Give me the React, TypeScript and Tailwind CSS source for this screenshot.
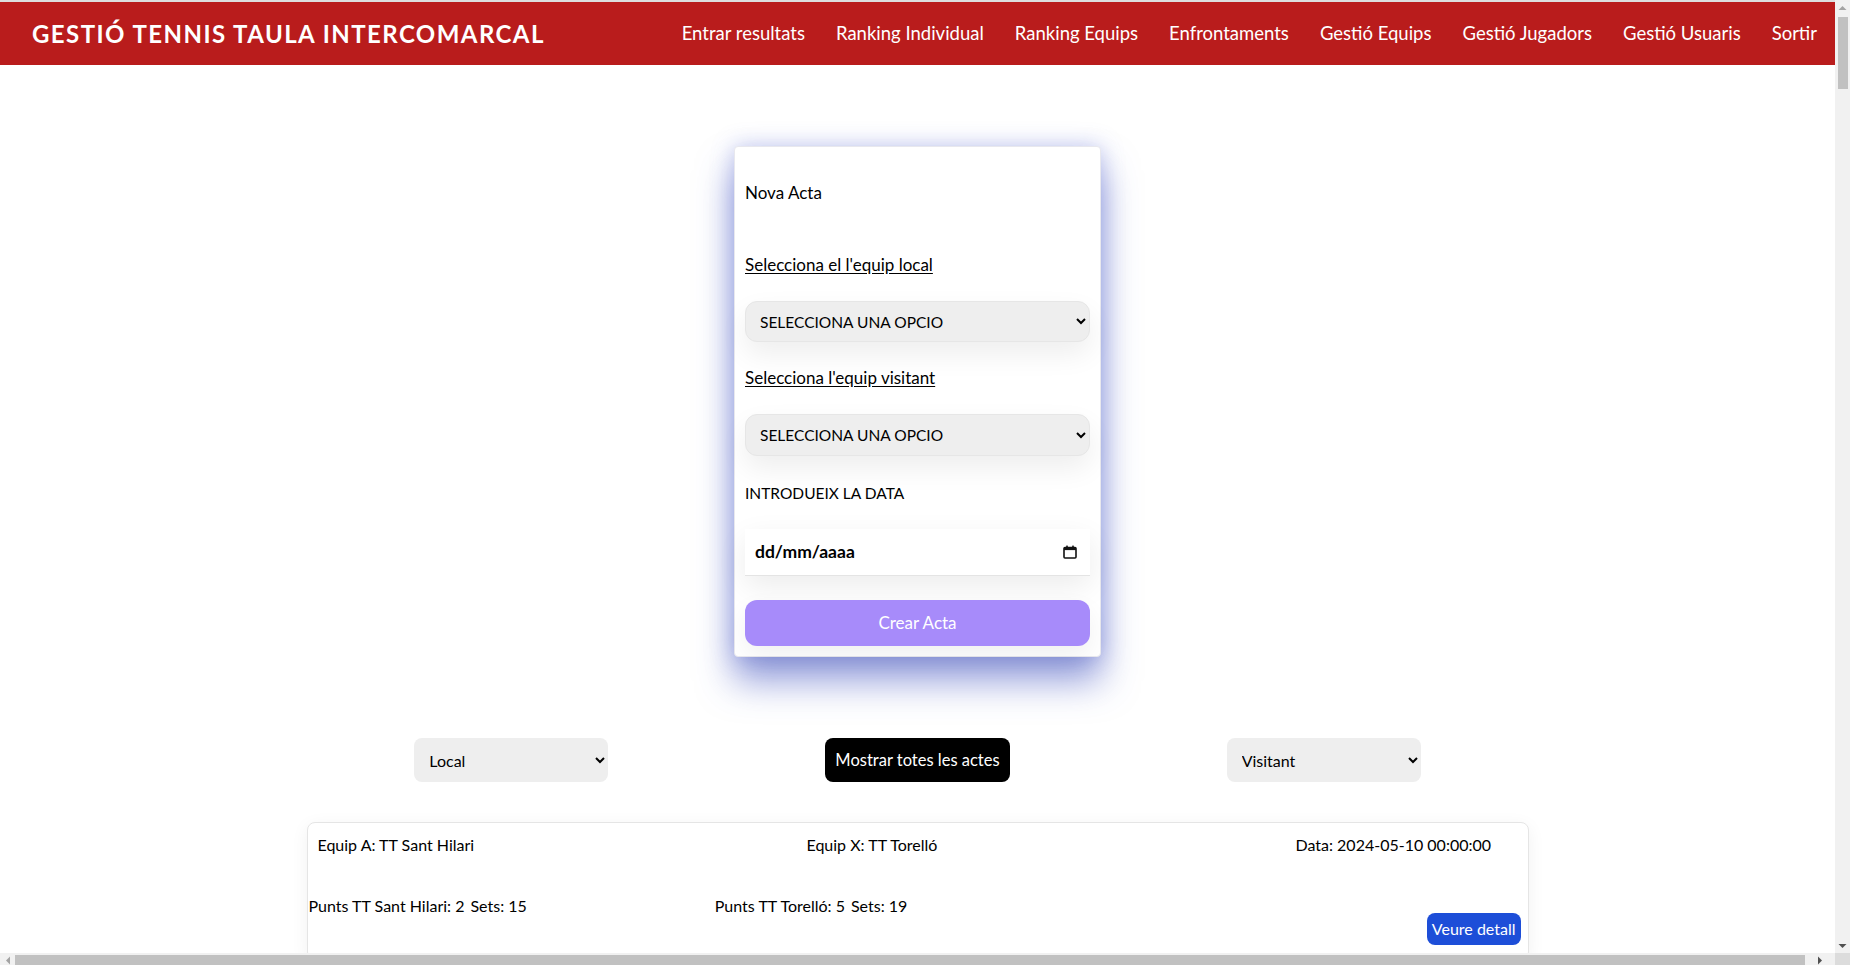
import { useState } from "react";

const links = [
  "Entrar resultats",
  "Ranking Individual",
  "Ranking Equips",
  "Enfrontaments",
  "Gestió Equips",
  "Gestió Jugadors",
  "Gestió Usuaris",
  "Sortir",
];

const teams = ["TT Sant Hilari", "TT Torelló", "CTT Vic", "TT Manlleu", "CTT Olot", "TT Ripoll"];

type Acta = {
  local: string;
  visitant: string;
  data: string;
  puntsA: number;
  setsA: number;
  puntsB: number;
  setsB: number;
};

const actes: Acta[] = [
  { local: "TT Sant Hilari", visitant: "TT Torelló", data: "2024-05-10 00:00:00", puntsA: 2, setsA: 15, puntsB: 5, setsB: 19 },
  { local: "CTT Vic", visitant: "TT Manlleu", data: "2024-05-03 00:00:00", puntsA: 4, setsA: 17, puntsB: 3, setsB: 14 },
];

function CalendarIcon() {
  return (
    <svg width="14" height="14" viewBox="0 0 14 14" fill="none">
      <rect x="1" y="2.5" width="12" height="10.5" rx="1" stroke="#111" strokeWidth="1.6" />
      <rect x="1" y="2.5" width="12" height="2.6" fill="#111" />
      <rect x="3.2" y="0.6" width="1.6" height="2.6" fill="#111" />
      <rect x="9.2" y="0.6" width="1.6" height="2.6" fill="#111" />
    </svg>
  );
}

function Arrow({ dir, color }: { dir: "up" | "down" | "left" | "right"; color: string }) {
  const pts = {
    up: "3.5,6 7.5,2 11.5,6",
    down: "3.5,2 7.5,6 11.5,2",
    left: "6,0.5 2,4.5 6,8.5",
    right: "2,0.5 6,4.5 2,8.5",
  }[dir];
  const vertical = dir === "up" || dir === "down";
  return (
    <svg width={vertical ? 15 : 8} height={vertical ? 8 : 9} viewBox={vertical ? "0 0 15 8" : "0 0 8 9"}>
      <polygon points={pts} fill={color} />
    </svg>
  );
}

// fake window scrollbars, as in the reference capture
function Scrollbars() {
  return (
    <>
      <div className="fixed top-0 right-0 w-[15px] h-[953px] bg-[#f1f1f1] flex flex-col items-center">
        <div className="h-[15px] flex items-center">
          <Arrow dir="up" color="#a3a3a3" />
        </div>
        <div className="mt-[2px] w-[10px] h-[72px] bg-[#c1c1c1]" />
        <div className="mt-auto h-[15px] flex items-center">
          <Arrow dir="down" color="#505050" />
        </div>
      </div>
      <div className="fixed bottom-0 left-0 w-[1835px] h-[12px] bg-[#f1f1f1] flex items-end">
        <div className="w-[15px] h-[10px] flex items-center justify-center">
          <Arrow dir="left" color="#a3a3a3" />
        </div>
        <div className="w-[1790px] h-[10px] bg-[#c1c1c1]" />
        <div className="flex-1 h-[10px] flex items-center justify-center">
          <Arrow dir="right" color="#505050" />
        </div>
      </div>
      <div className="fixed bottom-0 right-0 w-[15px] h-[12px] bg-[#dcdcdc]" />
    </>
  );
}

function NovaActa() {
  const [local, setLocal] = useState("");
  const [visitant, setVisitant] = useState("");

  return (
    <div className="w-[367px] mx-auto mt-[81px] bg-white border border-[#e8e8ee] rounded-[4px] shadow-[0_0_22px_rgba(95,110,215,0.35),0_24px_36px_rgba(60,78,190,0.55)] px-[10px] pt-[34px] pb-[10px] flex flex-col gap-6 text-[17px] leading-6 text-black">
      <h2 className="mb-6">Nova Acta</h2>

      <label htmlFor="local" className="underline underline-offset-2">
        Selecciona el l'equip local
      </label>
      <select
        id="local"
        value={local}
        onChange={(e) => setLocal(e.target.value)}
        className="h-[41px] w-full rounded-xl bg-[#eeeeee] border border-[#e6e6e6] pl-[10px] pr-2 text-[15.5px] uppercase shadow-[0_12px_28px_rgba(0,0,0,0.07)]"
      >
        <option value="">SELECCIONA UNA OPCIO</option>
        {teams.map((t) => (
          <option key={t}>{t}</option>
        ))}
      </select>

      <label htmlFor="visitant" className="underline underline-offset-2">
        Selecciona l'equip visitant
      </label>
      <select
        id="visitant"
        value={visitant}
        onChange={(e) => setVisitant(e.target.value)}
        className="h-[42px] w-full rounded-xl bg-[#eeeeee] border border-[#e6e6e6] pl-[10px] pr-2 text-[15.5px] uppercase shadow-[0_12px_28px_rgba(0,0,0,0.07)]"
      >
        <option value="">SELECCIONA UNA OPCIO</option>
        {teams.map((t) => (
          <option key={t}>{t}</option>
        ))}
      </select>

      <span className="text-[15.5px] mt-px">INTRODUEIX LA DATA</span>
      <div className="h-[47px] w-full bg-white border-b border-[#e4e4e4] flex items-center justify-between pl-[10px] pr-[13px] shadow-[0_10px_30px_rgba(0,0,0,0.08)]">
        <span className="font-bold text-[17.5px]">dd/mm/aaaa</span>
        <CalendarIcon />
      </div>

      <button className="h-[46px] w-full rounded-xl bg-[#a78bfa] text-white shadow-[0_10px_25px_rgba(0,0,0,0.06)]">
        Crear Acta
      </button>
    </div>
  );
}

function ActaCard({ acta }: { acta: Acta }) {
  return (
    <div className="border border-[#e5e5e5] rounded-lg shadow-[0_4px_18px_rgba(0,0,0,0.06)] bg-white pt-[10px] pb-[14px] mb-5">
      <div className="grid grid-cols-[489px_489px_1fr] pl-[10px]">
        <span>Equip A: {acta.local}</span>
        <span>Equip X: {acta.visitant}</span>
        <span>Data: {acta.data}</span>
      </div>
      <div className="grid grid-cols-3 mt-[37px] pl-[1px]">
        <span>
          Punts {acta.local}: {acta.puntsA}
          <span className="ml-[6px]">Sets: {acta.setsA}</span>
        </span>
        <span>
          Punts {acta.visitant}: {acta.puntsB}
          <span className="ml-[6px]">Sets: {acta.setsB}</span>
        </span>
        <div className="flex justify-end pr-[7px] pt-[19px]">
          <button className="h-[32px] px-[5px] rounded-lg bg-[#1d4ed8] text-white">Veure detall</button>
        </div>
      </div>
    </div>
  );
}

export default function App() {
  return (
    <div className="min-h-screen bg-white text-black font-['Lato','Noto_Sans',sans-serif]">
      {/* Navbar */}
      <nav className="w-screen h-[65px] border-t-2 border-[#dedede] bg-[#b91c1c] flex items-center justify-between pl-8 pr-[33px] text-white">
        <h1 className="text-[24px] font-bold tracking-[0.06em]">GESTIÓ TENNIS TAULA INTERCOMARCAL</h1>
        <ul className="flex items-center gap-[31px] text-[18.5px]">
          {links.map((l) => (
            <li key={l}>
              <a href="#">{l}</a>
            </li>
          ))}
        </ul>
      </nav>

      <main className="mr-[15px] pb-10">
        <NovaActa />

        {/* Filters */}
        <div className="w-[1223px] mx-auto mt-[81px] flex justify-around items-center text-[16px]">
          <select className="h-[44px] w-[194px] rounded-lg bg-[#eeeeee] pl-[11px] pr-2">
            <option>Local</option>
            {teams.map((t) => (
              <option key={t}>{t}</option>
            ))}
          </select>
          <button className="h-[44px] w-[185px] rounded-lg bg-black text-white text-[16.5px]">
            Mostrar totes les actes
          </button>
          <select className="h-[44px] w-[194px] rounded-lg bg-[#eeeeee] pl-[11px] pr-2">
            <option>Visitant</option>
            {teams.map((t) => (
              <option key={t}>{t}</option>
            ))}
          </select>
        </div>

        {/* Llista d'actes */}
        <div className="w-[1222px] mx-auto mt-10 text-[16px] leading-6">
          {actes.map((a, i) => (
            <ActaCard key={i} acta={a} />
          ))}
        </div>
      </main>

      <Scrollbars />
    </div>
  );
}
